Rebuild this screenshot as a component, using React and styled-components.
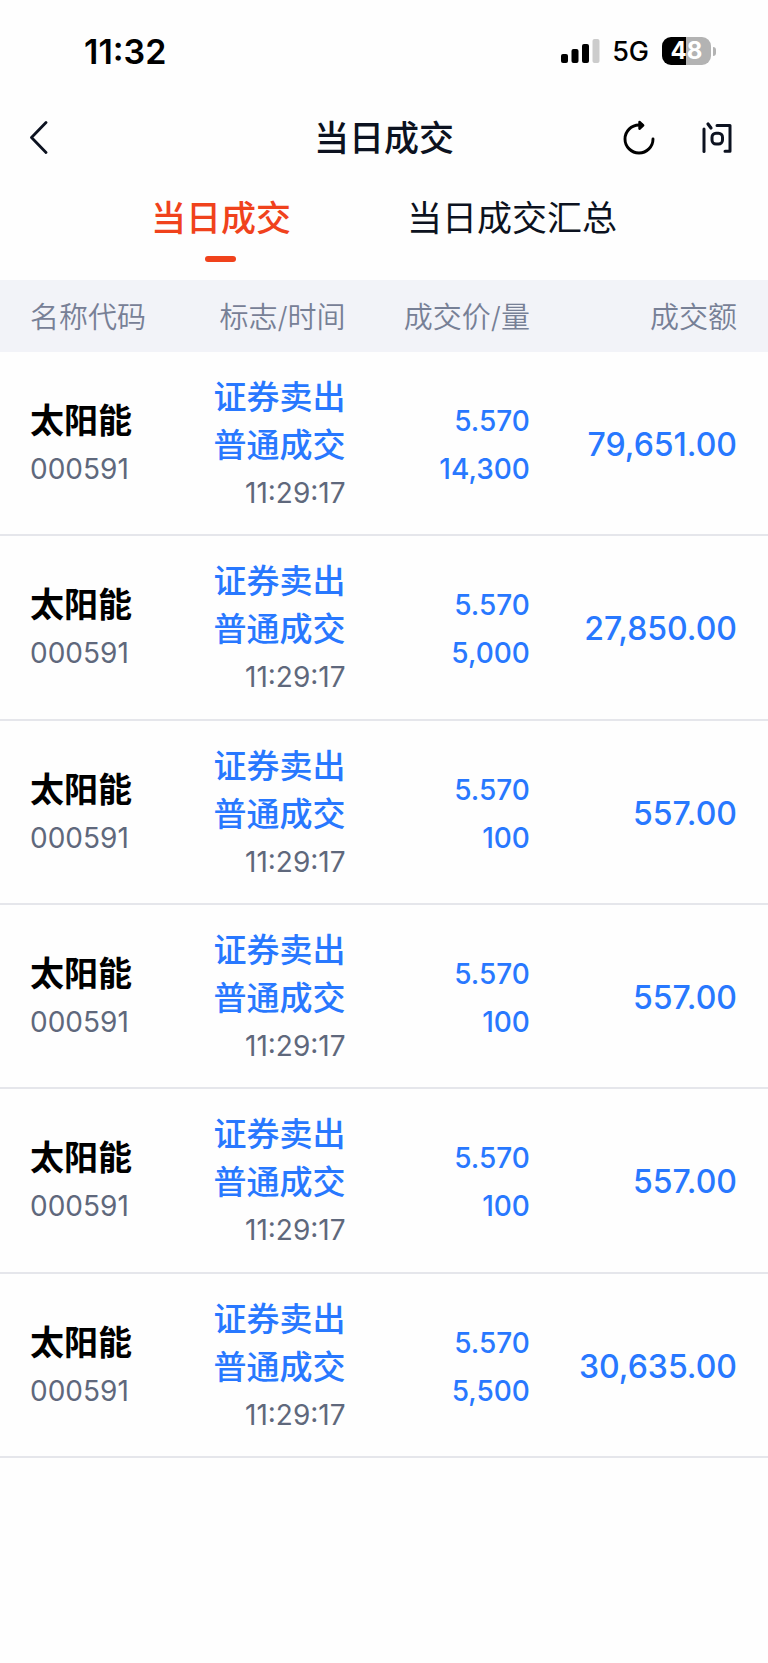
import React, { useState } from "react";
import styled, { createGlobalStyle } from "styled-components";

const GlobalStyle = createGlobalStyle`
  * {
    box-sizing: border-box;
  }

  body {
    margin: 0;
    background: #fefefe;
    color: #0c1220;
    font-family: Inter, "Noto Sans CJK SC", sans-serif;
  }

  button {
    padding: 0;
    border: 0;
    background: none;
    color: inherit;
    font: inherit;
    cursor: pointer;
  }
`;

const StatusBar = styled.div`
  display: flex;
  align-items: center;
  justify-content: space-between;
  height: 102px;
  padding: 0 52px 0 84px;
  color: #000;
`;

const Clock = styled.time`
  font-size: 34px;
  font-weight: 600;
`;

const StatusRight = styled.div`
  display: flex;
  align-items: center;
`;

const Network = styled.span`
  margin: 0 13px 0 12px;
  font-size: 27px;
  font-weight: 500;
`;

const Battery = styled.div`
  width: 49px;
  height: 28px;
  border-radius: 9px;
  background: linear-gradient(
    to right,
    #000 ${({ $level }) => $level}%,
    #b3b3b3 ${({ $level }) => $level}%
  );
  color: #fff;
  font-size: 24px;
  font-weight: 700;
  line-height: 28px;
  text-align: center;
`;

const BatteryTip = styled.span`
  width: 3px;
  height: 9px;
  margin-left: 2px;
  border-radius: 0 4px 4px 0;
  background: #b3b3b3;
`;

const Header = styled.header`
  display: grid;
  grid-template-columns: 1fr auto 1fr;
  align-items: center;
  height: 72px;
  padding: 0 30px;
`;

const Title = styled.h1`
  margin: 0;
  font-size: 35px;
  font-weight: 500;
  line-height: 48px;
`;

const IconButton = styled.button`
  display: flex;
`;

const Actions = styled.div`
  display: flex;
  justify-content: flex-end;
  gap: 46px;
`;

const Tabs = styled.nav`
  display: flex;
  justify-content: center;
  gap: 116px;
  height: 106px;
`;

const Tab = styled.button`
  display: flex;
  flex-direction: column;
  align-items: center;
  gap: 14px;
  padding-top: 20px;
  color: ${({ $active }) => ($active ? "#f0421c" : "#0c1220")};
  font-size: 35px;
  font-weight: ${({ $active }) => ($active ? 500 : 400)};
  line-height: 48px;

  &::after {
    content: "";
    width: 31px;
    height: 6px;
    border-radius: 3px;
    background: ${({ $active }) => ($active ? "#f0421c" : "transparent")};
  }
`;

const Table = styled.table`
  width: 100%;
  table-layout: fixed;
  border-collapse: separate;
  border-spacing: 0;
`;

const Th = styled.th`
  width: ${({ $width }) => $width};
  height: 72px;
  padding: 0 0 2px;
  background: #f2f3f8;
  color: #778096;
  font-size: 29px;
  font-weight: 350;
  text-align: right;
  white-space: nowrap;

  &:first-child {
    padding-left: 30px;
    text-align: left;
  }

  &:last-child {
    padding-right: 31px;
  }
`;

const Td = styled.td`
  height: 24vw;
  padding: 4px 0 0;
  border-bottom: 2px solid #e5e6eb;
  color: #2878ff;
  text-align: right;
  white-space: nowrap;

  &:first-child {
    padding-left: 30px;
    text-align: left;
  }

  &:last-child {
    padding-right: 31px;
  }
`;

const Line = styled.div`
  font-size: 28px;
  line-height: 48px;
`;

const Name = styled(Line)`
  color: #000;
  font-size: 34px;
  font-weight: 700;
`;

const Kind = styled(Line)`
  font-size: 33px;
  font-weight: 500;
`;

const Muted = styled(Line)`
  color: #5f687c;
`;

const Figure = styled(Line)`
  font-weight: 500;
`;

const Amount = styled(Line)`
  font-size: 32px;
  font-weight: 500;
`;

const SignalIcon = () => (
  <svg width="39" height="26" viewBox="0 0 39 26" aria-hidden="true">
    <rect x="0" y="16" width="7" height="9" rx="2" />
    <rect x="10.5" y="11" width="7" height="14" rx="2" />
    <rect x="21" y="6" width="7" height="19" rx="2" />
    <rect x="31.5" y="1" width="7" height="24" rx="2" fill="#ccc" />
  </svg>
);

const BackIcon = () => (
  <svg width="22" height="36" viewBox="2 0 22 36" fill="none" stroke="#0c1220">
    <path
      d="M18 2.5 3.5 17.5 18 32.5"
      strokeWidth="2.8"
      strokeLinecap="round"
      strokeLinejoin="round"
    />
  </svg>
);

const RefreshIcon = () => (
  <svg width="34" height="36" viewBox="0 0 34 36" fill="none" stroke="#000">
    <path d="M31 19a14 14 0 1 1-14-14h3" strokeWidth="2.9" strokeLinecap="round" />
    <path
      d="M17.5 2 21.2 5.4 17.5 8.8z"
      fill="#000"
      strokeWidth="2.4"
      strokeLinecap="round"
      strokeLinejoin="round"
    />
  </svg>
);

const AskIcon = () => (
  <svg
    width="36"
    height="36"
    viewBox="0 0 36 36"
    fill="none"
    stroke="#0c1220"
    strokeWidth="3"
    strokeLinecap="round"
    strokeLinejoin="round"
  >
    <path d="M2 9V31.5" />
    <path d="M6 4 9 8" strokeWidth="3.2" />
    <path d="M15 5.5H28V31.2H23" />
    <rect x="10" y="13.2" width="10.5" height="10.8" rx="4" />
  </svg>
);

const tabs = ["当日成交", "当日成交汇总"];

const columns = [
  { label: "名称代码", width: "20%" },
  { label: "标志/时间", width: "25%" },
  { label: "成交价/量", width: "24%" },
  { label: "成交额", width: "31%" },
];

const trade = {
  name: "太阳能",
  code: "000591",
  side: "证券卖出",
  type: "普通成交",
  time: "11:29:17",
  price: "5.570",
};

const trades = [
  { ...trade, id: 1, volume: "14,300", amount: "79,651.00" },
  { ...trade, id: 2, volume: "5,000", amount: "27,850.00" },
  { ...trade, id: 3, volume: "100", amount: "557.00" },
  { ...trade, id: 4, volume: "100", amount: "557.00" },
  { ...trade, id: 5, volume: "100", amount: "557.00" },
  { ...trade, id: 6, volume: "5,500", amount: "30,635.00" },
];

const TradeRow = ({ name, code, side, type, time, price, volume, amount }) => (
  <tr>
    <Td>
      <Name>{name}</Name>
      <Muted>{code}</Muted>
    </Td>
    <Td>
      <Kind>{side}</Kind>
      <Kind>{type}</Kind>
      <Muted>{time}</Muted>
    </Td>
    <Td>
      <Figure>{price}</Figure>
      <Figure>{volume}</Figure>
    </Td>
    <Td>
      <Amount>{amount}</Amount>
    </Td>
  </tr>
);

const App = () => {
  const [activeTab, setActiveTab] = useState(0);

  return (
    <>
      <GlobalStyle />
      <StatusBar>
        <Clock>11:32</Clock>
        <StatusRight>
          <SignalIcon />
          <Network>5G</Network>
          <Battery $level={48}>48</Battery>
          <BatteryTip />
        </StatusRight>
      </StatusBar>
      <Header>
        <IconButton type="button" aria-label="返回">
          <BackIcon />
        </IconButton>
        <Title>当日成交</Title>
        <Actions>
          <IconButton type="button" aria-label="刷新">
            <RefreshIcon />
          </IconButton>
          <IconButton type="button" aria-label="问">
            <AskIcon />
          </IconButton>
        </Actions>
      </Header>
      <Tabs>
        {tabs.map((label, index) => (
          <Tab
            key={label}
            type="button"
            $active={index === activeTab}
            onClick={() => setActiveTab(index)}
          >
            {label}
          </Tab>
        ))}
      </Tabs>
      <Table>
        <thead>
          <tr>
            {columns.map(({ label, width }) => (
              <Th key={label} scope="col" $width={width}>
                {label}
              </Th>
            ))}
          </tr>
        </thead>
        <tbody>
          {trades.map(({ id, ...row }) => (
            <TradeRow key={id} {...row} />
          ))}
        </tbody>
      </Table>
    </>
  );
};

export default App;
